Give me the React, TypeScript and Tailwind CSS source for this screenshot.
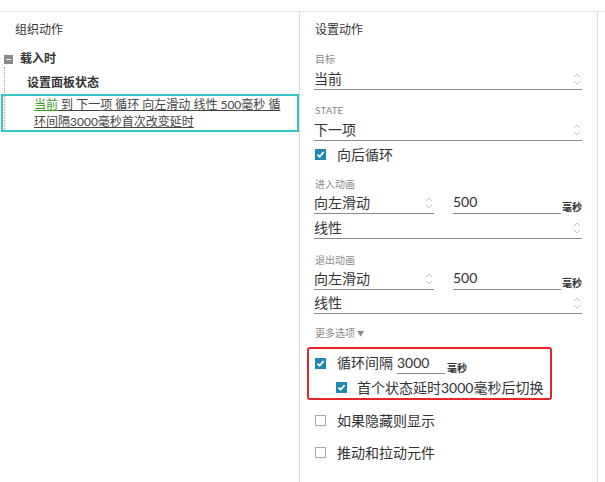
import React from "react";

const font = { fontFamily: "Lato, 'Noto Sans CJK SC', sans-serif" };

function Spinner() {
  return (
    <svg width="8" height="14" viewBox="0 0 8 14" className="shrink-0">
      <path d="M1 5 L4 2 L7 5" fill="none" stroke="#c4c4c4" strokeWidth="1" />
      <path d="M1 9 L4 12 L7 9" fill="none" stroke="#c4c4c4" strokeWidth="1" />
    </svg>
  );
}

function Check({ on }: { on: boolean }) {
  if (!on) return <span className="w-[11px] h-[11px] border border-[#a8a8a8] bg-white shrink-0" />;
  return (
    <span className="w-[11px] h-[11px] bg-[#1f88b3] flex items-center justify-center shrink-0">
      <svg width="9" height="9" viewBox="0 0 9 9">
        <path d="M1.5 4.6 L3.6 6.6 L7.6 2.2" fill="none" stroke="#fff" strokeWidth="1.8" />
      </svg>
    </span>
  );
}

function Label({ text, className = "" }: { text: string; className?: string }) {
  return <div className={`text-[10px] leading-[12px] text-[#8a8a8a] ${className}`}>{text}</div>;
}

function Select({ value, className = "" }: { value: string; className?: string }) {
  return (
    <div className={`flex items-center justify-between h-[21px] border-b border-[#8c8c8c] pr-[1px] ${className}`}>
      <span className="text-[14px] leading-[18px] text-[#333]">{value}</span>
      <Spinner />
    </div>
  );
}

function AnimRow({ dir }: { dir: string }) {
  return (
    <div className="flex items-start h-[21px]">
      <Select value={dir} className="w-[120px]" />
      <div className="ml-[19px] w-[108px] h-[21px] border-b border-[#8c8c8c] text-[14px] leading-[18px] text-[#333]">
        500
      </div>
      <span className="ml-[1px] mt-[8px] text-[10px] leading-[12px] font-bold text-[#333]">毫秒</span>
    </div>
  );
}

export default function App() {
  return (
    <div className="w-[605px] h-[482px] bg-white overflow-hidden" style={font}>
      <div className="mt-[11px] border-t border-[#e2e2e2] flex h-[471px]">
        {/* left */}
        <div className="w-[300px] border-r border-[#dcdcdc] pt-[10px]">
          <div className="pl-[15px] text-[12px] leading-[16px] text-[#333]">组织动作</div>
          <div className="mt-[13px] flex items-center h-[16px] pl-[4px]">
            <span className="w-[9px] h-[9px] bg-[#8a8a8a] flex items-center justify-center">
              <span className="w-[5px] h-[1px] bg-white" />
            </span>
            <span className="ml-[7px] text-[12px] font-bold text-[#333]">载入时</span>
          </div>
          <div className="relative">
            <div className="absolute left-[4px] top-0 h-[64px] border-l border-dotted border-[#9a9a9a]" />
            <div className="pt-[8px] pl-[27px] text-[12px] leading-[16px] font-bold text-[#333]">设置面板状态</div>
            <div className="mt-[3px] ml-[1px] w-[298px] border-2 border-[#33c6c6] pl-[31px] text-[12px] leading-[17px] text-[#444] whitespace-nowrap">
              <div>
                <span className="text-[#3d9a2c] underline">当前</span>
                <span className="underline"> 到 下一项 循环 向左滑动 线性 500毫秒 循</span>
              </div>
              <div className="underline">环间隔3000毫秒首次改变延时</div>
            </div>
          </div>
        </div>

        {/* right */}
        <div className="w-[298px] border-r border-[#dcdcdc] pt-[10px] pl-[14px] pr-[15px] flex flex-col">
          <div className="pl-[1px] text-[12px] leading-[16px] text-[#333]">设置动作</div>
          <Label text="目标" className="mt-[15px] pl-[1px]" />
          <Select value="当前" className="mt-[4px]" />
          <Label text="STATE" className="mt-[14px] pl-[1px]" />
          <Select value="下一项" className="mt-[4px]" />
          <div className="mt-[4px] h-[18px] flex items-center pl-[1px]">
            <Check on />
            <span className="ml-[11px] text-[14px] text-[#333]">向后循环</span>
          </div>
          <Label text="进入动画" className="mt-[15px] pl-[1px]" />
          <div className="mt-[3px]">
            <AnimRow dir="向左滑动" />
          </div>
          <Select value="线性" className="mt-[4px]" />
          <Label text="退出动画" className="mt-[15px] pl-[1px]" />
          <div className="mt-[3px]">
            <AnimRow dir="向左滑动" />
          </div>
          <Select value="线性" className="mt-[3px]" />
          <div className="mt-[13px] pl-[1px] flex items-center text-[10px] leading-[12px] text-[#8a8a8a]">
            更多选项<span className="ml-[2px] text-[7px]">▼</span>
          </div>
          <div className="mt-[8px] -ml-[7px] w-[245px] border-2 border-[#e3262a] rounded-[3px] pl-[6px] pt-[5px] pb-[2px]">
            <div className="h-[18px] flex items-center">
              <Check on />
              <span className="ml-[11px] text-[14px] leading-[18px] text-[#333]">循环间隔</span>
              <div className="ml-[4px] self-start w-[48px] h-[20px] border-b border-[#8c8c8c] text-[14px] leading-[18px] text-[#333]">
                3000
              </div>
              <span className="ml-[2px] self-start mt-[8px] text-[10px] leading-[12px] font-bold text-[#333]">毫秒</span>
            </div>
            <div className="mt-[6px] h-[18px] flex items-center pl-[21px]">
              <Check on />
              <span className="ml-[10px] text-[14px] text-[#333]">首个状态延时3000毫秒后切换</span>
            </div>
          </div>
          <div className="mt-[11px] h-[18px] flex items-center pl-[1px]">
            <Check on={false} />
            <span className="ml-[11px] text-[14px] text-[#333]">如果隐藏则显示</span>
          </div>
          <div className="mt-[14px] h-[18px] flex items-center pl-[1px]">
            <Check on={false} />
            <span className="ml-[11px] text-[14px] text-[#333]">推动和拉动元件</span>
          </div>
        </div>
      </div>
    </div>
  );
}
